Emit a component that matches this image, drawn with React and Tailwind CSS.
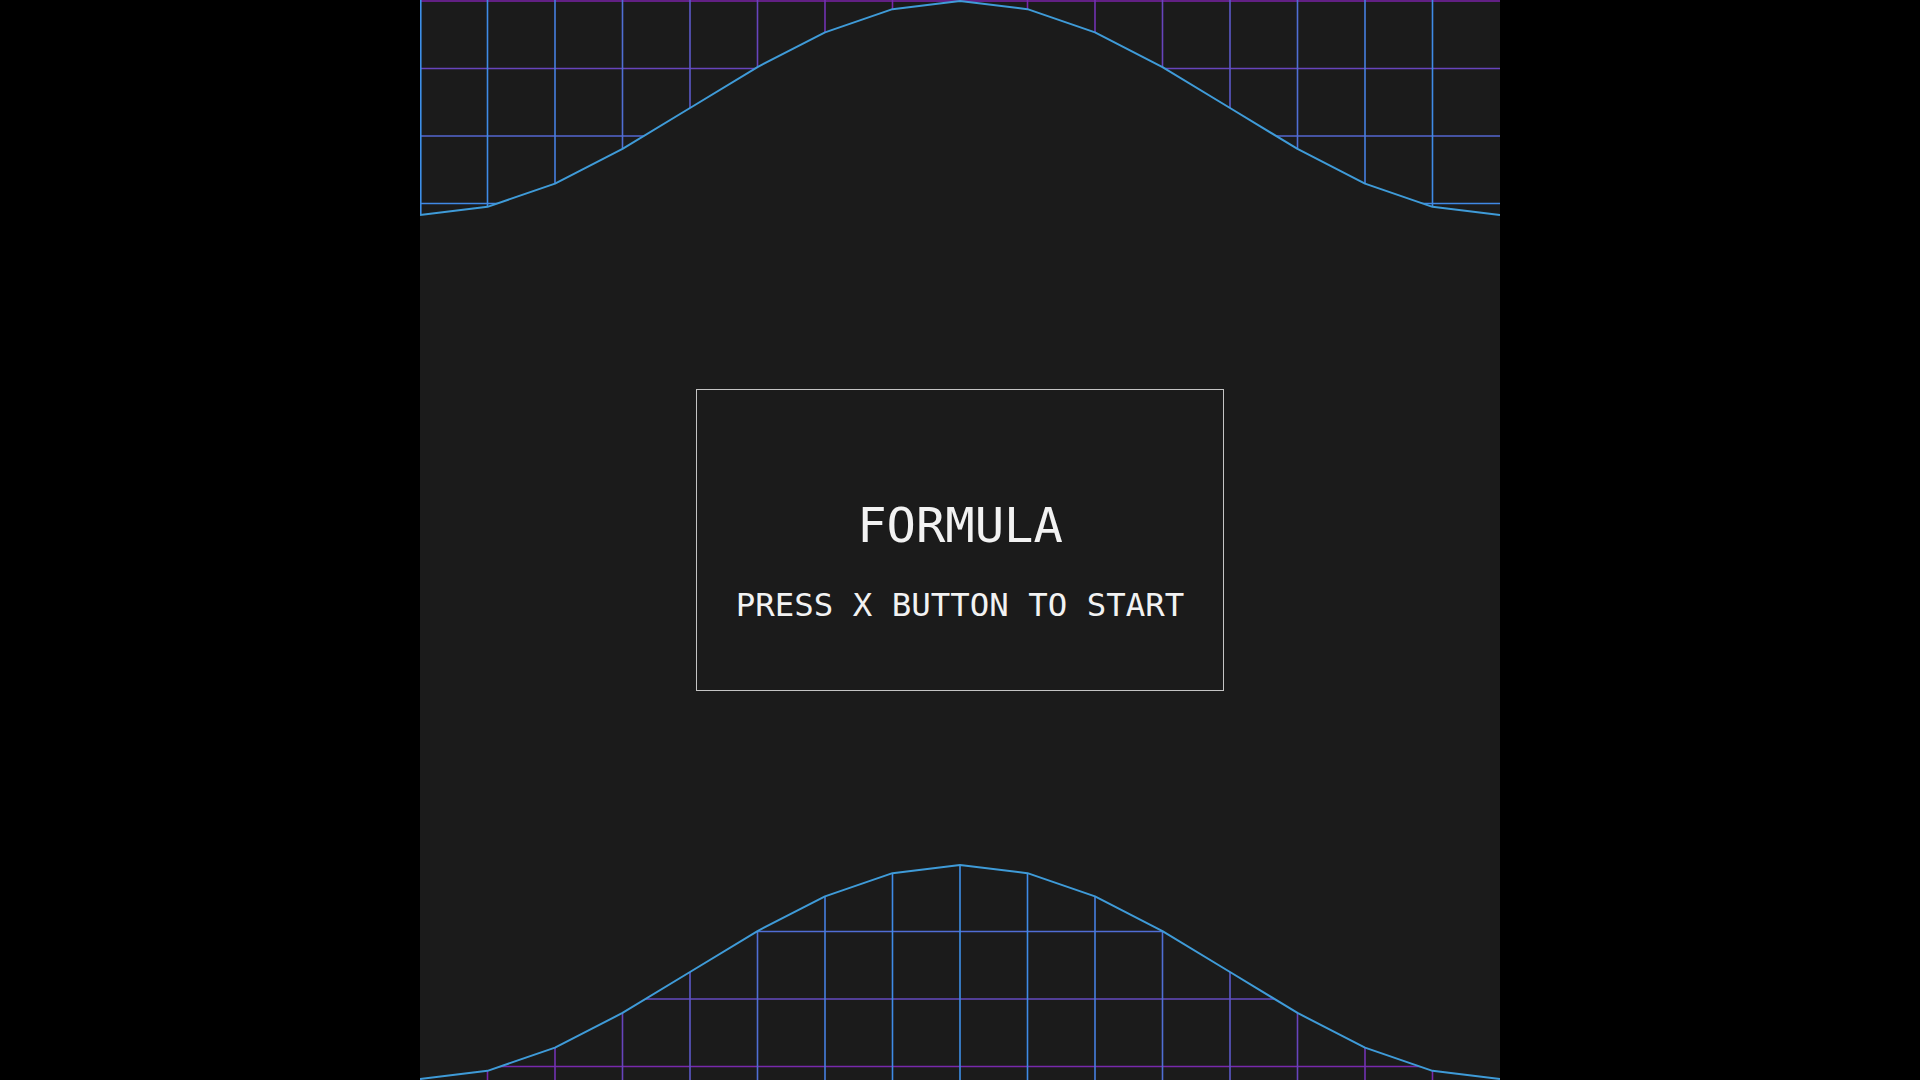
import React from 'react';

const CELL = 67.5;
const SIZE = 1080;
const DEPTH = 215;
const BOTTOM_SHIFT = 864;

// hill profile sampled at every grid column: low at the sides, peak in the middle
const waveY = (i) => 108 - 107 * Math.cos((Math.PI * (i - 8)) / 8);

const cols = Array.from({ length: 17 }, (_, i) => i);
const topPts = cols.map((i) => [i * CELL, waveY(i)]);
const bottomPts = topPts.map(([x, y]) => [x, y + BOTTOM_SHIFT]);

const toStr = (pts) => pts.map(([x, y]) => `${x},${y}`).join(' ');

// purple near the edge, blue further in
const tint = (t) => {
  const a = [123, 34, 168];
  const b = [61, 143, 232];
  const k = Math.min(Math.max(t, 0), 1);
  return `rgb(${a.map((v, n) => Math.round(v + (b[n] - v) * k)).join(',')})`;
};

function GridWave() {
  const topClip = `0,0 ${SIZE},0 ${toStr([...topPts].reverse())}`;
  const bottomClip = `${toStr(bottomPts)} ${SIZE},${SIZE} 0,${SIZE}`;

  const topRows = [1, 68.5, 136, 203.5];
  const bottomRows = [931.5, 999, 1066.5];
  const verticals = cols.slice(0, 16);

  return (
    <svg className="absolute inset-0" width={SIZE} height={SIZE} viewBox={`0 0 ${SIZE} ${SIZE}`}>
      <defs>
        <clipPath id="top-area">
          <polygon points={topClip} />
        </clipPath>
        <clipPath id="bottom-area">
          <polygon points={bottomClip} />
        </clipPath>
      </defs>

      <g clipPath="url(#top-area)" strokeWidth="1.6">
        {topRows.map((y) => (
          <line key={y} x1="0" x2={SIZE} y1={y} y2={y} stroke={tint(y / DEPTH)} />
        ))}
        {verticals.map((i) => {
          const x = Math.max(i * CELL, 0.8);
          const len = waveY(i);
          return <line key={i} x1={x} x2={x} y1="0" y2={len} stroke={tint(len / DEPTH)} />;
        })}
      </g>

      <g clipPath="url(#bottom-area)" strokeWidth="1.6">
        {bottomRows.map((y) => (
          <line key={y} x1="0" x2={SIZE} y1={y} y2={y} stroke={tint((SIZE - y) / DEPTH)} />
        ))}
        {verticals.map((i) => {
          const x = Math.max(i * CELL, 0.8);
          const yb = waveY(i) + BOTTOM_SHIFT;
          return <line key={i} x1={x} x2={x} y1={yb} y2={SIZE} stroke={tint((SIZE - yb) / DEPTH)} />;
        })}
      </g>

      <polyline points={toStr(topPts)} fill="none" stroke="#3f9bd8" strokeWidth="2" strokeLinejoin="round" />
      <polyline points={toStr(bottomPts)} fill="none" stroke="#3f9bd8" strokeWidth="2" strokeLinejoin="round" />
    </svg>
  );
}

export default function App() {
  return (
    <div className="flex h-screen w-full justify-center bg-black">
      <div className="relative flex h-[1080px] w-[1080px] items-center justify-center overflow-hidden bg-[#1b1b1b]">
        <GridWave />
        <div className="relative flex h-[302px] w-[528px] flex-col items-center border border-[#c4c4c4] pt-[107px] font-['DejaVu_Sans_Mono',monospace] text-[#f2f2f2]">
          <h1 className="text-[48.8px] leading-[57px]">FORMULA</h1>
          <p className="mt-[32px] text-[32.4px] leading-[38px]">PRESS X BUTTON TO START</p>
        </div>
      </div>
    </div>
  );
}
